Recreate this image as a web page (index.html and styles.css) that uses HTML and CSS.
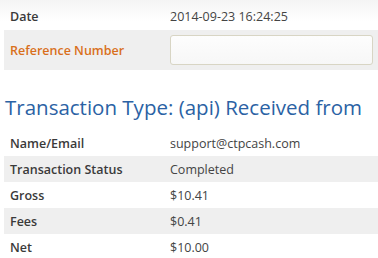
FILE: index.html
```html
<!DOCTYPE html>
<html lang="en">
<head>
    <meta charset="UTF-8">
    <title>Transaction Details</title>
    <link rel="stylesheet" href="styles.css">
</head>
<body>
    <div class="details top">
        <div class="row first">
            <div class="label">Date</div>
            <div class="value">2014-09-23 16:24:25</div>
        </div>
        <div class="row shade ref">
            <div class="label ref-label">Reference Number</div>
            <div class="value"><input type="text" class="ref-input"></div>
        </div>
    </div>

    <h2 class="section-title">Transaction Type: (api) Received from</h2>

    <div class="details">
        <div class="row">
            <div class="label">Name/Email</div>
            <div class="value">support@ctpcash.com</div>
        </div>
        <div class="row shade">
            <div class="label">Transaction Status</div>
            <div class="value">Completed</div>
        </div>
        <div class="row">
            <div class="label">Gross</div>
            <div class="value">$10.41</div>
        </div>
        <div class="row shade">
            <div class="label">Fees</div>
            <div class="value">$0.41</div>
        </div>
        <div class="row">
            <div class="label">Net</div>
            <div class="value">$10.00</div>
        </div>
    </div>
</body>
</html>
```
FILE: styles.css
```css
body{
    margin: 0;
    padding: 0;
    font-family: 'Open Sans', sans-serif;
    font-size: 12.5px;
    color: #444;
    background-color: #fff;
}

.details{
    margin-left: 4px;
}

.row{
    display: grid;
    grid-template-columns: 160px 1fr;
    align-items: center;
    height: 26px;
}

.row.first{
    height: 30px;
    box-sizing: border-box;
    padding-top: 3px;
    margin-left: -4px;
    padding-left: 4px;
    background: linear-gradient(#f4f4f4, #fff 70%);
}

.shade{
    background-color: #efefef;
}

.row.ref{
    height: 40px;
}

.label{
    padding: 0 6px;
    font-weight: 600;
    color: #3a3a3a;
}

.value{
    padding: 0 6px;
}

.ref-label{
    color: #d9701c;
}

.ref-input{
    display: block;
    box-sizing: border-box;
    width: 203px;
    height: 30px;
    margin: 0;
    border: 1px solid #d8d5c4;
    border-radius: 3px;
    background: linear-gradient(#fdfdfd, #f7f7f7);
    outline: none;
}

.section-title{
    margin: 0;
    padding: 23px 0 0 5px;
    height: 37px;
    font-size: 20.5px;
    font-weight: normal;
    color: #2b62a4;
}
```
